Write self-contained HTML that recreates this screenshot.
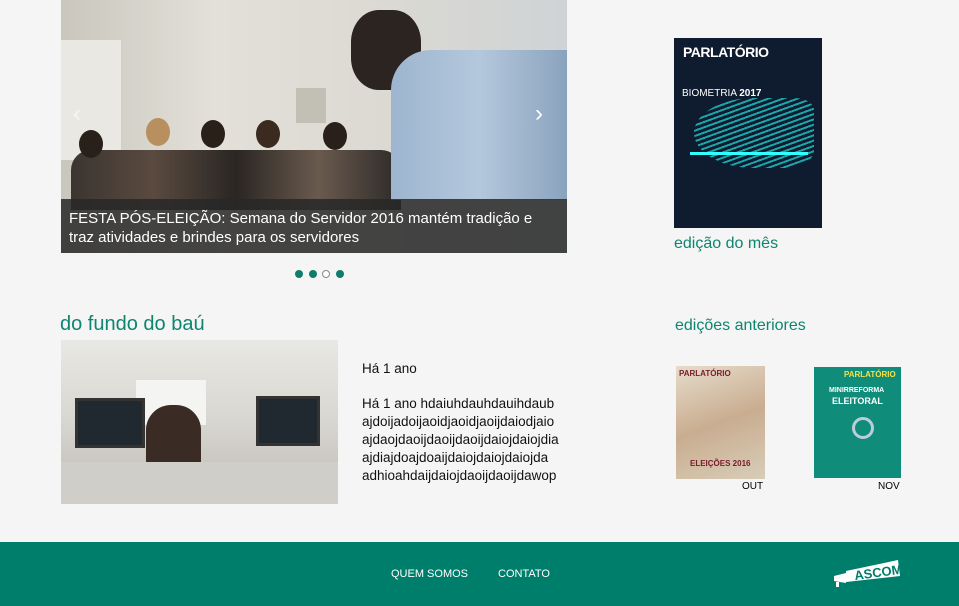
<!DOCTYPE html>
<html><head><meta charset="utf-8"><style>
*{margin:0;padding:0;box-sizing:border-box}
body{width:959px;height:606px;background:#f5f5f5;font-family:"Liberation Sans",sans-serif;position:relative;overflow:hidden}
.abs{position:absolute}
.slider{left:61px;top:0;width:506px;height:253px;overflow:hidden;background:linear-gradient(90deg,#c9c6bd 0%,#e2e0d8 30%,#dcdad2 60%,#cfd3d6 100%)}
.cap{left:0;top:199px;width:506px;height:54px;background:rgba(40,40,40,.85);color:#fff;font-size:15px;line-height:19px;padding:10px 26px 0 8px}
.green{color:#0e8570}
.dot{width:8px;height:8px;border-radius:50%;background:#0e7d6b;top:270px}
.foot{left:0;top:542px;width:959px;height:64px;background:#007e6c}
</style></head><body>
<div class="abs slider">
 <div class="abs" style="left:0;top:40px;width:60px;height:120px;background:#e9e8e2"></div>
 <div class="abs" style="left:235px;top:88px;width:30px;height:35px;background:#c2c0b5"></div>
 <div class="abs" style="left:10px;top:150px;width:330px;height:60px;background:linear-gradient(90deg,#3b3530,#5a4a40,#2a2623,#6a5a4e,#2c2a28);border-radius:20px 20px 0 0"></div>
 <div class="abs" style="left:18px;top:130px;width:24px;height:28px;border-radius:50%;background:#2a201a"></div>
 <div class="abs" style="left:85px;top:118px;width:24px;height:28px;border-radius:50%;background:#b89060"></div>
 <div class="abs" style="left:140px;top:120px;width:24px;height:28px;border-radius:50%;background:#2a201a"></div>
 <div class="abs" style="left:195px;top:120px;width:24px;height:28px;border-radius:50%;background:#3a2a20"></div>
 <div class="abs" style="left:262px;top:122px;width:24px;height:28px;border-radius:50%;background:#2a201a"></div>
 <div class="abs" style="left:290px;top:10px;width:70px;height:80px;border-radius:40%;background:#2b2420"></div>
 <div class="abs" style="left:330px;top:50px;width:176px;height:150px;background:linear-gradient(90deg,#9db5cf,#b4c8dc,#8aa3bd);border-radius:40px 0 0 0"></div>
 <div class="abs" style="left:474px;top:100px;color:#fff;font-size:24px">›</div>
 <div class="abs" style="left:12px;top:100px;color:#fff;font-size:24px;opacity:.6">‹</div>
 <div class="abs cap">FESTA PÓS-ELEIÇÃO: Semana do Servidor 2016 mantém tradição e traz atividades e brindes para os servidores</div>
</div>
<div class="abs dot" style="left:295px"></div>
<div class="abs dot" style="left:309px"></div>
<div class="abs dot" style="left:322px;background:#fff;border:1px solid #888"></div>
<div class="abs dot" style="left:336px"></div>

<div class="abs" style="left:674px;top:38px;width:148px;height:190px;background:#0f1b2e">
 <div class="abs" style="left:9px;top:6px;color:#fff;font-weight:bold;font-size:14px;letter-spacing:-.5px">PARLATÓRIO</div>
 <div class="abs" style="left:8px;top:50px;color:#fff;font-size:10px">BIOMETRIA <b>2017</b></div>
 <div class="abs" style="left:20px;top:60px;width:120px;height:70px;background:repeating-linear-gradient(160deg,#1ec8c8 0 2px,transparent 2px 5px);border-radius:60% 20% 30% 60%;opacity:.8"></div>
 <div class="abs" style="left:16px;top:114px;width:118px;height:3px;background:#3ff"></div>
</div>
<div class="abs green" style="left:674px;top:235px;font-size:16px">edição do mês</div>
<div class="abs green" style="left:675px;top:317px;font-size:16px">edições anteriores</div>
<div class="abs" style="left:676px;top:366px;width:89px;height:113px;background:linear-gradient(160deg,#e6dccb,#c9ad90 50%,#d8cdb8)">
 <div class="abs" style="left:3px;top:3px;color:#7a1b2a;font-weight:bold;font-size:8px">PARLATÓRIO</div>
 <div class="abs" style="left:14px;top:93px;color:#7a1b2a;font-weight:bold;font-size:8px">ELEIÇÕES 2016</div>
</div>
<div class="abs" style="left:742px;top:481px;font-size:10px">OUT</div>
<div class="abs" style="left:814px;top:367px;width:87px;height:111px;background:#108d7a">
 <div class="abs" style="left:30px;top:3px;color:#f6e04a;font-weight:bold;font-size:8px">PARLATÓRIO</div>
 <div class="abs" style="left:15px;top:20px;color:#fff;font-weight:bold;font-size:7px">MINIRREFORMA</div>
 <div class="abs" style="left:18px;top:29px;color:#fff;font-weight:bold;font-size:9px">ELEITORAL</div>
 <div class="abs" style="left:38px;top:50px;width:22px;height:22px;border-radius:50%;border:3px solid #bcd;"></div>
</div>
<div class="abs" style="left:878px;top:481px;font-size:10px">NOV</div>

<div class="abs green" style="left:60px;top:313px;font-size:20px">do fundo do baú</div>
<div class="abs" style="left:61px;top:340px;width:277px;height:164px;background:linear-gradient(180deg,#e8e8e4 0,#d8d6d0 50%,#bdb9b2 100%)">
 <div class="abs" style="left:75px;top:40px;width:70px;height:45px;background:#f4f4f2"></div>
 <div class="abs" style="left:14px;top:58px;width:70px;height:50px;background:#202830;border:3px solid #333"></div>
 <div class="abs" style="left:195px;top:56px;width:64px;height:50px;background:#202830;border:3px solid #333"></div>
 <div class="abs" style="left:85px;top:65px;width:55px;height:99px;background:#3a2c24;border-radius:25px 25px 0 0"></div>
 <div class="abs" style="left:0;top:122px;width:277px;height:42px;background:#d0cec8"></div>
</div>
<div class="abs" style="left:362px;top:361px;font-size:13.5px;color:#111">Há 1 ano</div>
<div class="abs" style="left:362px;top:395px;font-size:13.5px;color:#111;line-height:18px;width:240px">Há 1 ano hdaiuhdauhdauihdaub ajdoijadoijaoidjaoidjaoijdaiodjaio ajdaojdaoijdaoijdaoijdaiojdaiojdia ajdiajdoajdoaijdaiojdaiojdaiojda adhioahdaijdaiojdaoijdaoijdawop</div>

<div class="abs foot">
 <div class="abs" style="left:391px;top:26px;color:#fff;font-size:11px">QUEM SOMOS</div>
 <div class="abs" style="left:498px;top:26px;color:#fff;font-size:11px">CONTATO</div>
 <svg class="abs" style="left:830px;top:14px" width="72" height="34" viewBox="0 0 72 34"><path d="M4 20 L16 17 L16 27 L4 25Z M6 26 L6 31 L9 31 L9 26" fill="#fff"/><path d="M16 15 L68 4 L70 20 L16 26Z" fill="#fff"/><text x="24" y="22" font-family="Liberation Sans" font-weight="bold" font-size="13" fill="#007e6c" transform="rotate(-8 40 16)">ASCOM</text></svg>
</div>
</body></html>
